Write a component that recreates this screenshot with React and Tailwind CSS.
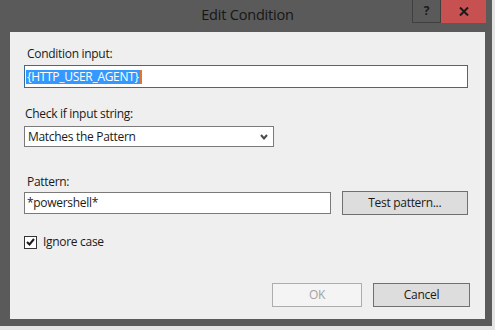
import React from 'react';

const font = { fontFamily: '"Open Sans", "Noto Sans", sans-serif' };

const Field = ({ className = '', children }) => (
  <div className={`flex h-[22px] items-center border border-[#7a7a7a] bg-white pl-[2px] text-[#1a1a1a] ${className}`}>
    {children}
  </div>
);

const Button = ({ children, disabled, className = '' }) => (
  <div
    className={`flex h-[24px] items-center justify-center border ${
      disabled ? 'border-[#adadad] bg-[#f4f4f4] text-[#a3a3a3]' : 'border-[#707070] bg-[#dddddd] text-[#1a1a1a]'
    } ${className}`}
  >
    {children}
  </div>
);

export default function App() {
  return (
    <div className="h-[330px] w-[495px] overflow-hidden bg-[#e4e4e4]" style={font}>
      <div className="flex h-[326px] w-[492px] flex-col bg-[#5a5a5a] pl-[10px] pr-[7px] pb-[7px]">
        <div className="relative flex h-[32px] shrink-0 items-start justify-center">
          <span className="mt-[5px] text-[14.5px] leading-[20px] tracking-[-0.2px] text-[#161616]">Edit Condition</span>
          <div className="absolute right-[-1px] top-0 flex">
            <div className="flex h-[23px] w-[29px] items-center justify-center border border-[#3f3f3f] border-t-0 text-[12px] font-bold text-[#1a1a1a]">
              ?
            </div>
            <div className="flex h-[23px] w-[45px] items-center justify-center bg-[#c75050]">
              <svg width="10" height="9" viewBox="0 0 10 9">
                <path d="M1 0.5 L9 8.5 M9 0.5 L1 8.5" stroke="#1a1a1a" strokeWidth="2" />
              </svg>
            </div>
          </div>
        </div>

        <div className="flex flex-1 flex-col bg-[#efefef] pl-[14px] pr-[17px] pt-[14px] text-[12px] leading-[16px] tracking-[-0.3px] text-[#1a1a1a]">
          <div className="pl-[3px]">Condition input:</div>
          <div className="mt-[3px] flex h-[23px] items-center border border-[#3c6a96] bg-white pl-[1px]">
            <span className="bg-[#3399ff] px-[1px] leading-[14px] text-white">{'{HTTP_USER_AGENT}'}</span>
            <span className="h-[14px] w-[2px] bg-[#e0782a]" />
          </div>

          <div className="mt-[18px] pl-[1px]">Check if input string:</div>
          <div className="mt-[4px] flex h-[21px] w-[250px] items-center justify-between border border-[#7a7a7a] bg-white pl-[3px] pr-[5px]">
            <span>Matches the Pattern</span>
            <svg width="8" height="6" viewBox="0 0 8 6">
              <path d="M1 1 L4 4.5 L7 1" fill="none" stroke="#4a4a4a" strokeWidth="2" />
            </svg>
          </div>

          <div className="mt-[27px] pl-[3px]">Pattern:</div>
          <div className="mt-[1px] flex items-center gap-[11px]">
            <Field className="w-[308px]">*powershell*</Field>
            <Button className="w-[127px]">Test pattern...</Button>
          </div>

          <div className="mt-[19px] flex items-center gap-[6px]">
            <div className="flex h-[13px] w-[13px] items-center justify-center border border-[#333333] bg-white">
              <svg width="9" height="8" viewBox="0 0 9 8">
                <path d="M1 4 L3.5 6.5 L8 1" fill="none" stroke="#1a1a1a" strokeWidth="2" />
              </svg>
            </div>
            <span>Ignore case</span>
          </div>

          <div className="mr-[-2px] mt-[33px] flex justify-end gap-[11px]">
            <Button disabled className="w-[90px]">OK</Button>
            <Button className="w-[97px]">Cancel</Button>
          </div>
        </div>
      </div>
    </div>
  );
}
